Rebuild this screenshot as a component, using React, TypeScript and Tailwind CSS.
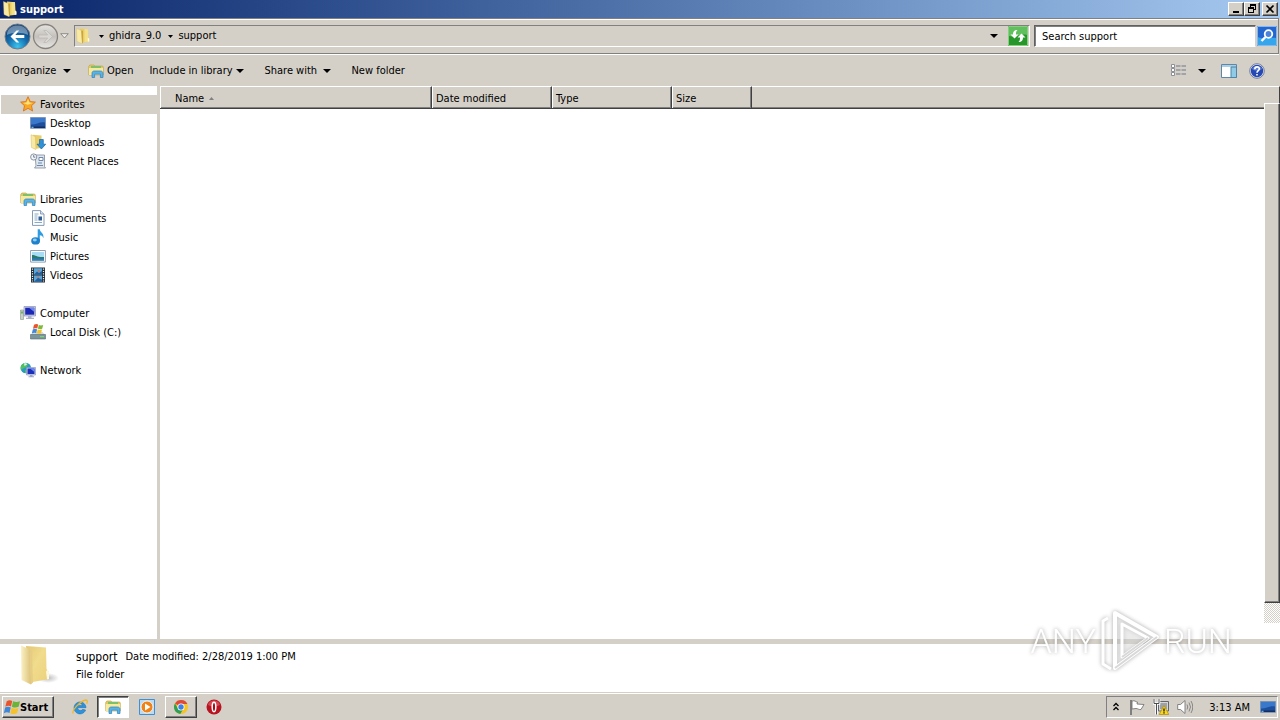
import type { ReactNode } from "react";

const UI = "text-[11px] leading-[14px] text-black";

function Svg({ children, size = "size-4", box = "0 0 16 16" }: { children: ReactNode; size?: string; box?: string }) {
  return (
    <svg viewBox={box} className={`${size} shrink-0`} aria-hidden="true">
      {children}
    </svg>
  );
}

function FolderIcon() {
  return (
    <Svg>
      <path d="M5 .6 13 1.3 13.3 9.200 14.500 10.500V13.700L5.500 14.800Z" fill="#e9cc62" />
      <path d="M9.500 1 13 1.300 13.300 13.400 9.500 14Z" fill="#f5e08a" />
      <path d="M1.500.6 6.300 2.400 7.200 15.700 2 13.500Z" fill="#f8eaa6" stroke="#dcbf5a" strokeWidth=".4" />
      <path d="M6.300 2.400 7.200 15.700 8 14.300V2.800Z" fill="#c9a540" />
      <path d="M12.800 9.600 14.300 10.700V13.500L12.800 13.700Z" fill="#fffbe8" />
    </Svg>
  );
}

function LargeFolderIcon() {
  return (
    <Svg size="size-[42px]" box="0 0 42 42">
      <defs>
        <linearGradient id="folder-back" x1="0" y1="0" x2="1" y2="1">
          <stop offset="0" stopColor="#e3c873" />
          <stop offset=".45" stopColor="#f1dc8d" />
          <stop offset="1" stopColor="#ead07a" />
        </linearGradient>
        <linearGradient id="folder-flap" x1="0" y1="0" x2="1" y2="0">
          <stop offset="0" stopColor="#fbf1c4" />
          <stop offset="1" stopColor="#dcc27a" />
        </linearGradient>
        <radialGradient id="folder-shade">
          <stop offset="0" stopColor="#7c7c7c" stopOpacity=".5" />
          <stop offset="1" stopColor="#7c7c7c" stopOpacity="0" />
        </radialGradient>
      </defs>
      <ellipse cx="30" cy="34" rx="11" ry="5" fill="url(#folder-shade)" />
      <path d="M8 2 28 3.500 28.500 25 31 28V35L12 38.500Z" fill="url(#folder-back)" />
      <path d="m28 27.500 1.500-2 1.500 2.500V35l-2 .4Z" fill="#fdf8e0" />
      <path d="M3 1.500 12 5.500 13 40.500 3.500 36Z" fill="url(#folder-flap)" />
      <path d="M12 5.500 13 40.500 15 38.500 14 5.500Z" fill="#e6cd84" />
    </Svg>
  );
}

function LibraryIcon() {
  return (
    <Svg>
      <path d="M.7 3.5 1.8 2H6l1 1h7.6l.7 1v8H.8Z" fill="#e8c95c" stroke="#b8a048" strokeWidth=".6" />
      <path d="M3 3h10v2H3Z" fill="#7fc06a" />
      <path d="M1 5h14v7H1Z" fill="#f9e99c" />
      <path d="M4 14.5V10.2C4 8.8 5 8 6.2 8h6.3c1.6 0 2.5 1 2.5 2.4v4.1h-2.6v-3.3H6.6v3.3Z" fill="#58b4e8" stroke="#2e7fb8" strokeWidth=".7" />
    </Svg>
  );
}

function StarIcon() {
  return (
    <Svg>
      <path d="m8 .7 2.200 4.900 5.200.5-3.900 3.600 1.100 5.300L8 12.300 3.400 15l1.100-5.300L.6 6.100l5.200-.5Z" fill="#f9a825" stroke="#dd7417" strokeWidth=".9" strokeLinejoin="round" />
      <path d="m8 3 1.400 3.600 3.400.3-5 1.800-4.600-1.800 3.400-.3Z" fill="#ffe27a" />
    </Svg>
  );
}

function DesktopIcon() {
  return (
    <Svg>
      <path d="M.5 2.5h15v10.800H.5Z" fill="#1d4f9c" stroke="#7b93b5" strokeWidth=".8" />
      <path d="M1 3h14v4.500C10 6 6 10 1 9.500Z" fill="#3a78cc" />
      <path d="M1 11.500h14V13H1Z" fill="#123063" />
      <path d="M1.500 11.700h2V13h-2Z" fill="#6fb4f0" />
    </Svg>
  );
}

function DownloadsIcon() {
  return (
    <Svg>
      <path d="M3 .8 11.500 1.500V14L4 15Z" fill="#e8cd68" />
      <path d="M1 .8 5.300 2.500 6 15.600 1.400 13.400Z" fill="#f7e9a6" stroke="#d8bd5c" strokeWidth=".5" />
      <path d="M9.500 5.500h3.800v4.700h2.400L11.400 15 7 10.200h2.500Z" fill="#2f92d8" stroke="#1765a6" strokeWidth=".7" />
    </Svg>
  );
}

function RecentIcon() {
  return (
    <Svg>
      <path d="M5 2h9.500v11.500L15.500 15H4.500L6 13Z" fill="#dfe6ee" stroke="#7f8b9a" strokeWidth=".8" />
      <path d="M9 4.500h4v3H9ZM8 10h4M7 12.500h6" fill="#fff" stroke="#6c88aa" strokeWidth="1" />
      <circle cx="3.700" cy="4" r="3.100" fill="#f3f6fa" stroke="#7f8b9a" strokeWidth=".9" />
      <path d="M3.700 2v2.200h1.600" fill="none" stroke="#456" strokeWidth=".7" />
    </Svg>
  );
}

function DocumentIcon() {
  return (
    <Svg>
      <path d="M2.500.6h8L14 4v11.400H2.500Z" fill="#fdfeff" stroke="#7990ab" strokeWidth=".9" />
      <path d="M10.500.6V4H14" fill="#d7e3ef" stroke="#7990ab" strokeWidth=".8" />
      <path d="M4.500 4h4M4.500 6h3M4.500 8h3M4.500 10h3M4.500 12.500h7.500" stroke="#7f9fbe" strokeWidth=".9" />
      <path d="M8.500 6.500h3.500v4H8.500Z" fill="#2f5f94" />
    </Svg>
  );
}

function MusicIcon() {
  return (
    <Svg>
      <path d="M7.700.3h2.100C9.800 3.300 14.300 4 13.400 9.200 12.700 6.800 11.200 6.200 9.800 6.200v6H7.700Z" fill="#2f9be0" />
      <ellipse cx="5.600" cy="11.900" rx="4.400" ry="3.600" fill="#1f80cb" />
      <ellipse cx="4.800" cy="11" rx="2" ry="1.400" fill="#8ccdf3" />
    </Svg>
  );
}

function PictureIcon() {
  return (
    <Svg>
      <path d="M.6 2.500h14.800v11.600H.6Z" fill="#fff" stroke="#8195ab" strokeWidth=".9" />
      <path d="M2 4h12v8.600H2Z" fill="#a8dcf5" />
      <path d="M2 7c4 0 5 2.500 12 2v3.600H2Z" fill="#2a7a6a" />
      <path d="M2 10.500c4-.6 8 .6 12 0v2.100H2Z" fill="#2f79bd" />
    </Svg>
  );
}

function VideoIcon() {
  return (
    <Svg>
      <path d="M1 .5h14v15H1Z" fill="#22303c" />
      <path d="M4 1.200h8v6.300H4ZM4 8.500h8v6.300H4Z" fill="#58a7da" />
      <path d="m4 7.500 3-3 2 1.500 3-2v3.500ZM4 14.800l4-4 4 2v2Z" fill="#275f9b" />
      <path d="m7 2.500 3 1-1 2ZM6 10l3-1v2Z" fill="#d56c4c" />
      <path d="M2.500 1.500v13M13.500 1.500v13" stroke="#e8eef2" strokeWidth="1.200" strokeDasharray="1.200 1.200" />
    </Svg>
  );
}

function ComputerIcon() {
  return (
    <Svg>
      <path d="M.5 5h3v9.500h-3Z" fill="#c9d0c4" stroke="#8a9390" strokeWidth=".6" />
      <path d="M1 6.500h2v2H1Z" fill="#69b84b" />
      <path d="M4 1.500h11.500V11H4Z" fill="#d2d6ea" stroke="#8890b4" strokeWidth=".7" />
      <path d="M5.200 2.700h9.100v7H5.200Z" fill="#1b27b4" />
      <path d="M9 2.700h5.300v4.200Z" fill="#6e86ec" />
      <path d="M8 11h3.500v1.800H14V14H6v-1.200h2Z" fill="#aab0c8" />
    </Svg>
  );
}

function DiskIcon() {
  return (
    <Svg>
      <path d="m2.500 9 1.500-1h8.500L15.500 11H.5Z" fill="#d5dbe0" />
      <path d="M.5 10.500h15v4.500H.5Z" fill="#7c949c" stroke="#566a72" strokeWidth=".6" />
      <path d="M10 12.700h4" stroke="#7ee06a" strokeWidth="1" />
      <path d="M4 .8C5.700-.1 7-.1 8.200.6L7.300 4.600C6 4 4.600 4 3 4.700Z" fill="#e8542c" />
      <path d="M8.800.9c1.700.7 2.900.6 4.400 0l-1 3.900c-1.600.6-2.800.5-4.300-.1Z" fill="#7db93a" />
      <path d="M2.800 5.400c1.500-.6 2.800-.6 4.300 0l-1 3.900c-1.400-.6-2.600-.6-4.300.1Z" fill="#3f87d9" />
      <path d="M7.700 5.500c1.500.6 2.700.6 4.300 0l-1 3.900c-1.600.6-2.800.5-4.300-.1Z" fill="#f6c22c" />
    </Svg>
  );
}

function NetworkIcon() {
  return (
    <Svg>
      <circle cx="5.800" cy="6" r="5.300" fill="#2a9ac4" />
      <path d="M2 2.500c3-2 5-1.500 6 0L6.500 5 3 6.500 1 8C.4 5.500.8 4 2 2.500ZM5 8l3 .5-1 2.600H5Z" fill="#52c05b" />
      <path d="M4 1.500c2-.8 3 0 3 1L4.500 4Z" fill="#d9f6ee" />
      <path d="M6.500 5.500h9V13h-9Z" fill="#ccd4ee" stroke="#7f8dbb" strokeWidth=".6" />
      <path d="M7.500 6.500h7V12h-7Z" fill="#1c2fba" />
      <path d="M10 6.500h4.500V10Z" fill="#6c8aee" />
      <path d="M10 13h2.500v1.300H14v1H8.500v-1H10Z" fill="#9da7c8" />
    </Svg>
  );
}

function Caret() {
  return (
    <svg viewBox="0 0 8 4" className="h-1 w-2 shrink-0" aria-hidden="true">
      <path d="M0 0h8L4 4Z" fill="#000" />
    </svg>
  );
}

function SmallCaret() {
  return (
    <svg viewBox="0 0 5 3" className="h-[3px] w-[5px] shrink-0" aria-hidden="true">
      <path d="M0 0h5L2.500 3Z" fill="#000" />
    </svg>
  );
}

function WindowButton({ label, children }: { label: string; children: ReactNode }) {
  return (
    <button
      type="button"
      aria-label={label}
      className="flex h-[14px] w-4 items-center justify-center border border-t-white border-l-white border-r-[#404040] border-b-[#404040] bg-[#d4d0c8] shadow-[inset_-1px_-1px_0_#808080]"
    >
      {children}
    </button>
  );
}

function TitleBar() {
  return (
    <header className="flex h-[18px] items-center bg-linear-to-r from-[#0a246a] to-[#a6caf0] pr-[2px] pl-[2px]">
      <FolderIcon />
      <h1 className="ml-[2px] flex-1 pt-[2px] text-[11px] leading-[14px] font-bold text-white">support</h1>
      <WindowButton label="Minimize">
        <Svg size="h-[10px] w-3" box="0 0 12 10">
          <path d="M3 7h6v2H3Z" />
        </Svg>
      </WindowButton>
      <WindowButton label="Restore">
        <Svg size="h-[10px] w-3" box="0 0 12 10">
          <path d="M4 0h6v6H8V5h1V2H5v1H4ZM2 3h6v6H2ZM3 5v3h4V5Z" fillRule="evenodd" />
        </Svg>
      </WindowButton>
      <span className="w-[2px]" />
      <WindowButton label="Close">
        <Svg size="h-[10px] w-3" box="0 0 12 10">
          <path d="m2.500 1.500 7 7M9.500 1.500l-7 7" stroke="#000" strokeWidth="1.700" />
        </Svg>
      </WindowButton>
    </header>
  );
}

function AddressBar() {
  return (
    <div className="mr-px flex h-9 items-center border-t border-r border-b border-[#808080] pr-px pl-1 shadow-[inset_0_1px_0_#fff,0_1px_0_#fff]">
      <button type="button" aria-label="Back" className="shrink-0">
        <Svg size="size-[27px]" box="0 0 27 27">
          <defs>
            <radialGradient id="back" cx=".5" cy=".9" r=".8">
              <stop offset="0" stopColor="#3cc4ee" />
              <stop offset=".5" stopColor="#1470b0" />
              <stop offset="1" stopColor="#0c3c70" />
            </radialGradient>
          </defs>
          <circle cx="13.500" cy="13.500" r="12.500" fill="url(#back)" stroke="#6f7c88" />
          <path d="M3 12C3 5 8 2.500 13.500 2.500S24 5 24 12c-5-3-16-3-21 0Z" fill="#fff" opacity=".38" />
          <path d="m12.500 7.500-6 6 6 6h2.700l-3.900-4.500h9v-3h-9l3.900-4.500Z" fill="#fff" />
        </Svg>
      </button>
      <button type="button" aria-label="Forward" className="ml-px shrink-0">
        <Svg size="size-[27px]" box="0 0 27 27">
          <defs>
            <linearGradient id="forward" x1="0" y1="0" x2="0" y2="1">
              <stop offset="0" stopColor="#e6e4e0" />
              <stop offset=".5" stopColor="#c4c1bd" />
              <stop offset="1" stopColor="#e9e7e4" />
            </linearGradient>
          </defs>
          <circle cx="13.500" cy="13.500" r="12" fill="url(#forward)" stroke="#85827e" strokeWidth="1.300" />
          <path d="m14.500 7.500 6 6-6 6h-2.700l3.900-4.500h-9v-3h9l-3.900-4.500Z" fill="#d9d7d3" stroke="#b9b6b1" strokeWidth=".7" />
        </Svg>
      </button>
      <button type="button" aria-label="Recent pages" className="ml-px shrink-0">
        <Svg size="h-[6px] w-[9px]" box="0 0 9 6">
          <path d="M.7.7h7.600L4.500 5Z" fill="#efedea" stroke="#85827c" strokeWidth=".9" />
        </Svg>
      </button>
      <nav
        aria-label="Address"
        className={`ml-[5px] flex h-[22px] min-w-0 flex-1 items-center border border-t-[#808080] border-r-white border-b-white border-l-[#808080] ${UI}`}
      >
        <FolderIcon />
        <span className="ml-2 flex items-center gap-[5px]">
          <SmallCaret />
          <a href="#ghidra">ghidra_9.0</a>
        </span>
        <span className="ml-[7px] flex items-center gap-[5px]">
          <SmallCaret />
          <a href="#support">support</a>
        </span>
        <button type="button" aria-label="Previous locations" className="ml-auto flex h-full w-6 items-center justify-center">
          <Caret />
        </button>
        <button type="button" aria-label="Refresh" className="ml-[2px] mr-px">
          <Svg size="size-5" box="0 0 20 20">
            <path d="M0 0h20v20H0Z" fill="#27962b" />
            <path d="M1 1h18v8C13 7 7 12 1 10Z" fill="#62bf5d" />
            <path d="M.5.500h19v19H.500Z" fill="none" stroke="#86cf80" />
            <path d="M9.500 4C6 4 5 6 5 8.500H2.500l4 4 4-4H8c0-2 0-3 1.500-4.500Z" fill="#fff" />
            <path d="M10.500 16c3.500 0 4.500-2 4.500-4.500h2.500l-4-4-4 4H12c0 2 0 3-1.500 4.500Z" fill="#fff" />
          </Svg>
        </button>
      </nav>
      <input
        aria-label="Search support"
        placeholder="Search support"
        className="ml-1 h-[22px] w-[222px] border border-t-[#606060] border-r-[#d4d0c8] border-b-white border-l-[#606060] bg-white pl-[7px] text-[11px] leading-[14px] text-black shadow-[inset_1px_1px_0_#808080] outline-none placeholder:text-black"
      />
      <button type="button" aria-label="Search" className="ml-px">
        <Svg size="size-5" box="0 0 20 20">
          <path d="M0 0h20v20H0Z" fill="#2466d0" />
          <path d="M1 11c6 3 12 0 18 1v7H1Z" fill="#35a5ec" />
          <path d="M.5.500h19v19H.500Z" fill="none" stroke="#85b8f0" />
          <circle cx="11.500" cy="8" r="3.800" fill="#4b83dc" stroke="#fff" strokeWidth="1.800" />
          <path d="m8.500 11-4 4" stroke="#fff" strokeWidth="2.400" />
        </Svg>
      </button>
    </div>
  );
}

function CommandBar() {
  return (
    <div className={`mt-px flex h-[31px] items-center pr-[15px] pl-3 ${UI}`}>
      <button type="button" className="mr-[17px] flex w-[59px] items-center justify-between">
        Organize
        <Caret />
      </button>
      <button type="button" className="mr-4 flex items-center gap-[3px]">
        <LibraryIcon />
        Open
      </button>
      <button type="button" className="mr-5 flex w-[95px] items-center justify-between">
        Include in library
        <Caret />
      </button>
      <button type="button" className="mr-5 flex w-[67px] items-center justify-between">
        Share with
        <Caret />
      </button>
      <button type="button">New folder</button>
      <button type="button" aria-label="Change view" className="ml-auto">
        <Svg>
          <path d="M1.500 1.500h3v3h-3ZM1.500 5.500h3v3h-3ZM1.500 9.500h3v3h-3Z" fill="#fff" stroke="#8a8f98" />
          <path d="M6 3h4.500M11.500 3H16M6 7h4.500M11.500 7H16M6 11h4.500M11.500 11H16" stroke="#6e7684" />
        </Svg>
      </button>
      <button type="button" aria-label="More view options" className="ml-3 flex h-4 items-center">
        <Caret />
      </button>
      <button type="button" aria-label="Show the preview pane" className="ml-[15px]">
        <Svg>
          <path d="M.5 1.500h15v13H.5Z" fill="#fff" stroke="#5c87a8" />
          <path d="M1 2h14v2H1Z" fill="#a9cfe4" />
          <path d="M10 4h5.500v10.500H10Z" fill="#8fcbe6" stroke="#4f84a6" />
        </Svg>
      </button>
      <button type="button" aria-label="Help" className="ml-3">
        <Svg>
          <circle cx="8" cy="8" r="7.300" fill="#e8eaf0" stroke="#747f98" strokeWidth="1" />
          <circle cx="8" cy="8" r="6.200" fill="#2548b4" />
          <path d="M3 6c1-4 9-4 10 0-3 2-7 2-10 0Z" fill="#6080d4" />
          <path d="M5.800 6.200C5.800 3 10.500 3.200 10.300 6 10.200 7.500 8 7.700 8 9.700M8 11v1.500" fill="none" stroke="#fff" strokeWidth="1.600" />
        </Svg>
      </button>
    </div>
  );
}

type Place = { name: string; icon: ReactNode };
type Group = Place & { items: Place[] };

const groups: Group[] = [
  {
    name: "Favorites",
    icon: <StarIcon />,
    items: [
      { name: "Desktop", icon: <DesktopIcon /> },
      { name: "Downloads", icon: <DownloadsIcon /> },
      { name: "Recent Places", icon: <RecentIcon /> },
    ],
  },
  {
    name: "Libraries",
    icon: <LibraryIcon />,
    items: [
      { name: "Documents", icon: <DocumentIcon /> },
      { name: "Music", icon: <MusicIcon /> },
      { name: "Pictures", icon: <PictureIcon /> },
      { name: "Videos", icon: <VideoIcon /> },
    ],
  },
  { name: "Computer", icon: <ComputerIcon />, items: [{ name: "Local Disk (C:)", icon: <DiskIcon /> }] },
  { name: "Network", icon: <NetworkIcon />, items: [] },
];

function NavigationPane() {
  return (
    <nav aria-label="Places" className={`flex w-40 shrink-0 flex-col gap-[19px] border-r-[3px] border-[#d4d0c8] bg-white pt-[9px] pl-px ${UI}`}>
      {groups.map((group, index) => (
        <div key={group.name}>
          <a
            href={`#${group.name}`}
            className={index === 0 ? "flex h-[19px] items-start gap-1 bg-[#d4d0c8] pt-px pl-[19px]" : "flex h-[19px] items-start gap-1 pt-px pl-[19px]"}
          >
            {group.icon}
            <span className="pt-[2px]">{group.name}</span>
          </a>
          <ul>
            {group.items.map((item) => (
              <li key={item.name}>
                <a href={`#${item.name}`} className="flex h-[19px] items-start gap-1 pt-px pl-[29px]">
                  {item.icon}
                  <span className="pt-[2px]">{item.name}</span>
                </a>
              </li>
            ))}
          </ul>
        </div>
      ))}
    </nav>
  );
}

const headCell = "h-[23px] border-t border-r border-b border-t-white border-r-[#404040] border-b-[#404040] pt-[2px] text-left align-middle font-normal shadow-[inset_1px_0_0_#fff,inset_-1px_-1px_0_#808080]";

function FileList() {
  return (
    <main className="flex min-w-0 flex-1 bg-white">
      <div className="min-w-0 flex-1">
        <table className={`w-full table-fixed border-separate border-spacing-0 bg-[#d4d0c8] ${UI}`}>
          <thead>
            <tr>
              <th scope="col" className={`w-[272px] pl-[15px] ${headCell}`}>
                <span className="flex items-center gap-[5px]">
                  Name
                  <svg viewBox="0 0 5 3" className="h-[3px] w-[5px]" aria-hidden="true">
                    <path d="M0 3h5L2.500 0Z" fill="#808080" />
                  </svg>
                </span>
              </th>
              <th scope="col" className={`w-[120px] pl-1 ${headCell}`}>Date modified</th>
              <th scope="col" className={`w-[120px] pl-1 ${headCell}`}>Type</th>
              <th scope="col" className={`w-[80px] pl-1 ${headCell}`}>Size</th>
              <td className="border-t border-b border-t-white border-b-[#404040] shadow-[inset_0_-1px_0_#808080]" />
            </tr>
          </thead>
        </table>
      </div>
      <div className="flex w-4 shrink-0 flex-col pb-4" aria-hidden="true">
        <div className="h-[17px] border-t border-r border-t-white border-r-[#404040] bg-[#d4d0c8]" />
        <div className="flex-1 border border-t-white border-r-[#404040] border-b-[#404040] border-l-white bg-[#d4d0c8] shadow-[inset_-1px_-1px_0_#808080]" />
        <div className="h-5 bg-[repeating-conic-gradient(#d4d0c8_0_25%,#ffffff_0_50%)] bg-size-[2px_2px]" />
      </div>
    </main>
  );
}

function DetailsPane() {
  return (
    <section aria-label="Details" className={`flex h-12 items-start bg-white pl-[18px] ${UI}`}>
      <LargeFolderIcon />
      <div className="ml-4 pt-1">
        <p className="flex h-[18px] items-center gap-2">
          <span className="text-[12px]">support</span>
          <span>Date modified: 2/28/2019 1:00 PM</span>
        </p>
        <p className="flex h-[18px] items-center">File folder</p>
      </div>
    </section>
  );
}

const raised = "border border-t-white border-l-white border-r-[#404040] border-b-[#404040] shadow-[inset_-1px_-1px_0_#808080]";

function TaskBar() {
  return (
    <footer className={`flex h-7 items-center border-t border-[#d4d0c8] bg-[#d4d0c8] pr-[2px] pl-[2px] shadow-[inset_0_1px_0_#fff] ${UI}`}>
      <button type="button" className={`mt-px flex h-[22px] w-[52px] items-center font-bold ${raised}`}>
        <Svg size="size-[17px]">
          <path d="M3.500 2C5.500.7 7.200.9 8.700 1.800L7.500 7C5.900 6.100 4.200 6.200 2.200 7.200Z" fill="#e8542c" />
          <path d="M9.500 2.200c2.200 1 4.300.9 6.500 0L14.700 7.300c-2.200 1-4.200.9-6.400-.1Z" fill="#6db33a" />
          <path d="M2 8.100c1.900-1 3.500-1 5.300-.1L6.100 13.200c-1.800-.9-3.300-.8-5.300.2Z" fill="#3f87d9" />
          <path d="M8.100 8.300c2.200 1 4.200 1 6.400.1l-1.300 5.100c-2.200 1-4.100.9-6.300-.1Z" fill="#f6c22c" />
        </Svg>
        <span className="pt-[2px]">Start</span>
      </button>
      <nav aria-label="Taskbar" className="ml-4 flex items-center">
        <button type="button" aria-label="Internet Explorer" className="flex h-[22px] w-5 items-center justify-center">
          <Svg>
            <path d="M13.600 11.100A6 6 0 1 1 14 8.700H5.500a3 3 0 0 0 5.300 1.600ZM5.500 6.600h5.200a2.700 2.700 0 0 0-5.200 0Z" fill="#2b93dc" stroke="#1469ac" strokeWidth=".5" fillRule="evenodd" />
            <path d="M1.200 14.500C-.5 11 9 1.500 14 1c1.600 0 1.600 2 .6 3.800" fill="none" stroke="#f0b728" strokeWidth="1.300" />
          </Svg>
        </button>
        <button
          type="button"
          aria-label="Windows Explorer"
          className="ml-[7px] flex h-[22px] w-8 items-center justify-center border border-t-[#404040] border-r-white border-b-white border-l-[#404040] bg-white shadow-[inset_1px_1px_0_#808080]"
        >
          <LibraryIcon />
        </button>
        <button type="button" aria-label="Windows Media Player" className="ml-[10px] flex h-[22px] w-4 items-center justify-center">
          <Svg>
            <path d="M.5.500h15v15H.500Z" fill="#b8dcf6" stroke="#3f8fd4" />
            <circle cx="8" cy="8" r="6" fill="#f08318" stroke="#fff" strokeWidth=".8" />
            <path d="m6 4.500 5.500 3.500L6 11.500Z" fill="#fff" />
          </Svg>
        </button>
        <button type="button" aria-label="Google Chrome" className={`ml-[10px] flex h-[22px] w-8 items-center justify-center ${raised}`}>
          <Svg>
            <circle cx="8" cy="8" r="7" fill="#f5c526" />
            <path d="M8 8 2 4.400A7 7 0 0 1 14.400 5H8Z" fill="#dd4a3c" />
            <path d="M2 4.400A7 7 0 0 0 7.300 15L10.600 9.500 8 8 5 9.500Z" fill="#2f9f57" />
            <circle cx="8" cy="8" r="3.500" fill="#fff" />
            <circle cx="8" cy="8" r="2.700" fill="#3d7fe8" />
          </Svg>
        </button>
        <button type="button" aria-label="Opera" className="ml-[9px] flex h-[22px] w-4 items-center justify-center">
          <Svg>
            <circle cx="8" cy="8" r="7.500" fill="#b81420" />
            <path d="M2 6C3 0 13 0 14 6 10 8 6 8 2 6Z" fill="#e0616a" opacity=".7" />
            <ellipse cx="8" cy="8" rx="1.800" ry="4.700" fill="#a80e18" stroke="#fff" strokeWidth="1.500" />
          </Svg>
        </button>
      </nav>
      <div className="mt-px ml-auto flex h-[22px] items-center border border-t-[#808080] border-r-white border-b-white border-l-[#808080] pl-[6px]">
        <button type="button" aria-label="Show hidden icons">
          <Svg size="h-[10px] w-[6px]" box="0 0 6 10">
            <path d="m.5 4 2.500-2.500L5.500 4M.5 8 3 5.500 5.500 8" fill="none" stroke="#000" strokeWidth="1.300" />
          </Svg>
        </button>
        <span className="ml-[10px] flex gap-2">
          <Svg>
            <path d="M2 1v15" stroke="#777" strokeWidth="1.800" />
            <path d="M3 2c3-1 3.500 1 5.500 1L8 5l7 .5-3 5c-2 .5-3-1-5-1l-4 .5Z" fill="#fff" stroke="#777" strokeWidth=".9" />
          </Svg>
          <Svg>
            <path d="M5.500 2.500h10V12h-10Z" fill="#d4d6d8" stroke="#62666c" />
            <path d="M7 4h7v6H7Z" fill="#9ca2a8" />
            <path d="M1 0v4.500h5V0M3.500 4.500v11" fill="none" stroke="#fff" strokeWidth="2.600" />
            <path d="M1 0v4.500h5V0M3.500 4.500v11" fill="none" stroke="#4b4f54" strokeWidth="1" />
            <path d="m11 6.500 4.800 9H6.200Z" fill="#f9d71c" stroke="#b8920c" strokeWidth=".8" />
            <path d="M11 9.500v3M11 13.300v1.200" stroke="#000" strokeWidth="1.200" />
          </Svg>
          <Svg>
            <path d="M.7 5.500h2.800L8 1.500v13l-4.500-4H.7Z" fill="#fff" stroke="#777" strokeWidth=".9" />
            <path d="M10 5.500q1.500 2.500 0 5M12 3.500q3 4.500 0 9M14 2q3.500 6 0 12" fill="none" stroke="#7e7e7e" strokeWidth=".9" />
          </Svg>
        </span>
        <time className="ml-4 pt-[2px]">3:13 AM</time>
        <button type="button" aria-label="Show desktop" className="mr-px ml-[10px]">
          <DesktopIcon />
        </button>
      </div>
    </footer>
  );
}

function Watermark() {
  return (
    <div
      aria-hidden="true"
      className="pointer-events-none absolute right-12 bottom-12 flex items-center font-['Roboto','Liberation_Sans',sans-serif] text-[34px] leading-[62px] font-light text-white drop-shadow-[0_0_2px_rgba(0,0,0,0.35)]"
    >
      <span>ANY</span>
      <svg viewBox="0 0 60 62" className="mx-1 h-[62px] w-[60px]">
        <path d="M15 3 57 27 15 58Z" fill="#fff" fillOpacity=".35" stroke="#fff" strokeWidth="4" strokeLinejoin="round" />
        <path d="M8 8 3 11v43l8 5M22 14v33l26-19Z" fill="none" stroke="#fff" strokeWidth="3" strokeLinejoin="round" />
        <path d="M15 58 57 27M22 47l26-19" fill="none" stroke="#d8d8d8" strokeWidth="2" />
      </svg>
      <span>RUN</span>
    </div>
  );
}

export default function App() {
  return (
    <div className="relative flex min-h-screen flex-col bg-[#d4d0c8] font-['DejaVu_Sans_Condensed','Noto_Sans',sans-serif]">
      <TitleBar />
      <AddressBar />
      <CommandBar />
      <div className="flex flex-1">
        <NavigationPane />
        <FileList />
      </div>
      <div className="h-[5px]" />
      <DetailsPane />
      <TaskBar />
      <Watermark />
    </div>
  );
}
